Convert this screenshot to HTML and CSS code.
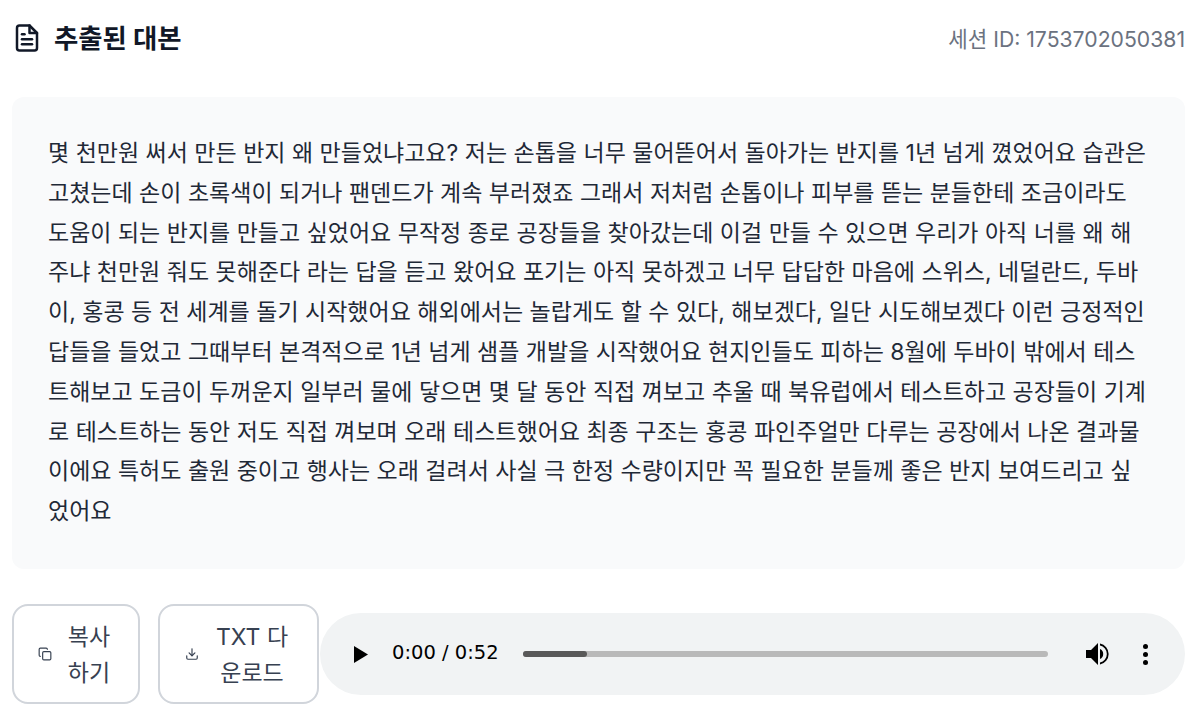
FILE: index.html
```html
<!DOCTYPE html>
<html lang="ko">
<head>
    <meta charset="UTF-8">
    <title>추출된 대본</title>
    <link rel="stylesheet" href="styles.css">
</head>
<body>
    <div class="header">
        <h2>
            <svg class="title-icon" viewBox="0 0 24 24" fill="none" stroke="currentColor" stroke-width="2" stroke-linecap="round" stroke-linejoin="round">
                <path d="M14 2H6a2 2 0 0 0-2 2v16a2 2 0 0 0 2 2h12a2 2 0 0 0 2-2V8z"/>
                <path d="M14 2v6h6"/>
                <path d="M16 13H8"/>
                <path d="M16 17H8"/>
                <path d="M10 9H8"/>
            </svg>
            <span class="title-text">추출된 대본</span>
        </h2>
        <span class="session">세션 ID: 1753702050381</span>
    </div>

    <div class="script-box">몇 천만원 써서 만든 반지 왜 만들었냐고요? 저는 손톱을 너무 물어뜯어서 돌아가는 반지를 1년 넘게 꼈었어요 습관은 고쳤는데 손이 초록색이 되거나 팬덴드가 계속 부러졌죠 그래서 저처럼 손톱이나 피부를 뜯는 분들한테 조금이라도 도움이 되는 반지를 만들고 싶었어요 무작정 종로 공장들을 찾아갔는데 이걸 만들 수 있으면 우리가 아직 너를 왜 해주냐 천만원 줘도 못해준다 라는 답을 듣고 왔어요 포기는 아직 못하겠고 너무 답답한 마음에 스위스, 네덜란드, 두바이, 홍콩 등 전 세계를 돌기 시작했어요 해외에서는 놀랍게도 할 수 있다, 해보겠다, 일단 시도해보겠다 이런 긍정적인 답들을 들었고 그때부터 본격적으로 1년 넘게 샘플 개발을 시작했어요 현지인들도 피하는 8월에 두바이 밖에서 테스트해보고 도금이 두꺼운지 일부러 물에 닿으면 몇 달 동안 직접 껴보고 추울 때 북유럽에서 테스트하고 공장들이 기계로 테스트하는 동안 저도 직접 껴보며 오래 테스트했어요 최종 구조는 홍콩 파인주얼만 다루는 공장에서 나온 결과물이에요 특허도 출원 중이고 행사는 오래 걸려서 사실 극 한정 수량이지만 꼭 필요한 분들께 좋은 반지 보여드리고 싶었어요</div>

    <div class="actions">
        <button class="btn btn-copy">
            <svg class="btn-icon" viewBox="0 0 24 24" fill="none" stroke="currentColor" stroke-width="2" stroke-linecap="round" stroke-linejoin="round">
                <rect x="8" y="8" width="14" height="14" rx="2"/>
                <path d="M4 16c-1.1 0-2-.9-2-2V4c0-1.1.9-2 2-2h10c1.1 0 2 .9 2 2"/>
            </svg>
            <span>복사하기</span>
        </button>
        <button class="btn btn-download">
            <svg class="btn-icon" viewBox="0 0 24 24" fill="none" stroke="currentColor" stroke-width="2" stroke-linecap="round" stroke-linejoin="round">
                <path d="M21 15v4a2 2 0 0 1-2 2H5a2 2 0 0 1-2-2v-4"/>
                <path d="M7 10l5 5 5-5"/>
                <path d="M12 15V3"/>
            </svg>
            <span>TXT 다운로드</span>
        </button>

        <div class="player">
            <svg class="play" viewBox="0 0 14 17"><path d="M0 0l14 8.5L0 17z"/></svg>
            <span class="time">0:00 / 0:52</span>
            <div class="track"><div class="track-fill"></div></div>
            <svg class="volume" viewBox="0 0 24 24"><path d="M0 8v8h5l7 7V1L5 8z"/><path d="M14 7v10a5.5 5.5 0 0 0 0-10z"/><path d="M14 1.5v2a8.7 8.7 0 0 1 0 17v2a10.7 10.7 0 0 0 0-21z"/></svg>
            <div class="more"><i></i><i></i><i></i></div>
        </div>
    </div>
</body>
</html>
```

FILE: styles.css
```css
* {
    margin: 0;
    padding: 0;
    box-sizing: border-box;
}

body {
    background: #fff;
    color: #111827;
    font-family: 'Inter', 'Noto Sans CJK KR', sans-serif;
    padding: 0 15px 0 12px;
    height: 720px;
    overflow: hidden;
}

.header {
    height: 97px;
    display: flex;
    justify-content: space-between;
    align-items: flex-start;
    padding-top: 20px;
}

.header h2 {
    display: flex;
    align-items: center;
    gap: 12px;
    font-size: 26.4px;
    line-height: 36px;
    font-weight: 700;
    color: #111827;
}

.title-icon {
    width: 30px;
    height: 30px;
}

.title-text {
    height: 36px;
}

.session {
    font-size: 21.2px;
    line-height: 36px;
    padding-top: 1px;
    color: #6b7280;
}

.script-box {
    height: 472px;
    background: #f9fafb;
    border-radius: 12px;
    padding: 37px 36px 36px;
    font-size: 23px;
    line-height: 39.8px;
    color: #1f2937;
}

.actions {
    display: flex;
    align-items: center;
    gap: 18px;
    margin-top: 35px;
}

.btn {
    display: flex;
    align-items: center;
    justify-content: center;
    height: 100px;
    background: #fff;
    border: 2px solid #d1d5db;
    border-radius: 16px;
    padding-right: 2px;
    font-family: inherit;
    font-size: 23px;
    line-height: 36px;
    color: #374151;
}

.btn span {
    padding-top: 2px;
}

.btn-copy {
    width: 128px;
    gap: 14px;
}

.btn-copy span {
    width: 46px;
}

.btn-download {
    width: 161px;
    gap: 15px;
}

.btn-download span {
    width: 76px;
}

.btn-icon {
    width: 14px;
    height: 14px;
    flex-shrink: 0;
}

.player {
    flex: 1;
    margin-left: -17px;
    height: 82px;
    background: #f1f3f4;
    border-radius: 41px;
    display: flex;
    align-items: center;
    padding: 0 37px 0 34px;
    color: #000;
}

.play {
    width: 14px;
    height: 17px;
    margin-right: 24px;
}

.time {
    font-family: 'DejaVu Sans', sans-serif;
    font-size: 19.5px;
    margin-bottom: 4px;
    white-space: nowrap;
}

.track {
    flex: 1;
    height: 6px;
    margin: 0 38px 0 24px;
    background: #b9b9b9;
    border-radius: 3px;
}

.track-fill {
    width: 64px;
    height: 100%;
    background: #595959;
    border-radius: 3px;
}

.volume {
    width: 24px;
    height: 24px;
    margin-right: 33px;
}

.more {
    display: flex;
    flex-direction: column;
    gap: 3px;
}

.more i {
    width: 5px;
    height: 5px;
    background: #000;
    border-radius: 50%;
}
```
